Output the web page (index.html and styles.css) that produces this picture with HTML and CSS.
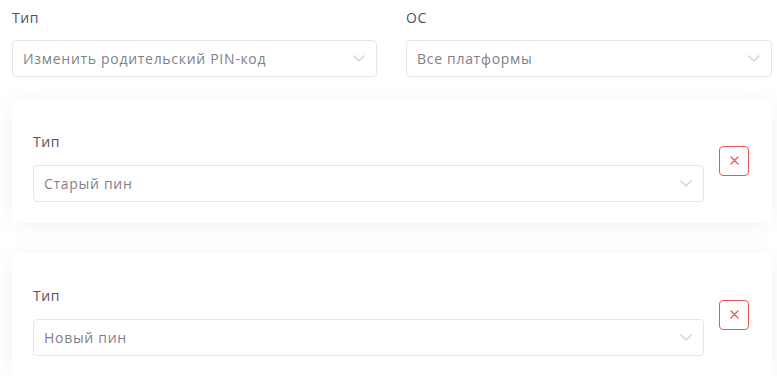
FILE: index.html
```html
<!DOCTYPE html>
<html lang="ru">
<head>
<meta charset="utf-8">
<link rel="stylesheet" href="styles.css">
</head>
<body>
<div class="page">
  <div class="top-row">
    <div class="field">
      <div class="label">Тип</div>
      <div class="select">
        <span class="value">Изменить родительский PIN-код</span>
        <svg class="chev" width="12" height="7" viewBox="0 0 12 7"><path d="M1 1l5 5 5-5" fill="none" stroke="#d6d6d9" stroke-width="1.6" stroke-linecap="round" stroke-linejoin="round"/></svg>
      </div>
    </div>
    <div class="field">
      <div class="label">ОС</div>
      <div class="select">
        <span class="value">Все платформы</span>
        <svg class="chev" width="12" height="7" viewBox="0 0 12 7"><path d="M1 1l5 5 5-5" fill="none" stroke="#d6d6d9" stroke-width="1.6" stroke-linecap="round" stroke-linejoin="round"/></svg>
      </div>
    </div>
  </div>

  <div class="card">
    <div class="card-body">
      <div class="label">Тип</div>
      <div class="select">
        <span class="value">Старый пин</span>
        <svg class="chev" width="12" height="7" viewBox="0 0 12 7"><path d="M1 1l5 5 5-5" fill="none" stroke="#d6d6d9" stroke-width="1.6" stroke-linecap="round" stroke-linejoin="round"/></svg>
      </div>
    </div>
    <button class="remove" type="button">
      <svg width="9" height="9" viewBox="0 0 9 9"><path d="M1 1l7 7M8 1L1 8" stroke="#e35a5a" stroke-width="1.3" stroke-linecap="round"/></svg>
    </button>
  </div>

  <div class="card">
    <div class="card-body">
      <div class="label">Тип</div>
      <div class="select">
        <span class="value">Новый пин</span>
        <svg class="chev" width="12" height="7" viewBox="0 0 12 7"><path d="M1 1l5 5 5-5" fill="none" stroke="#d6d6d9" stroke-width="1.6" stroke-linecap="round" stroke-linejoin="round"/></svg>
      </div>
    </div>
    <button class="remove" type="button">
      <svg width="9" height="9" viewBox="0 0 9 9"><path d="M1 1l7 7M8 1L1 8" stroke="#e35a5a" stroke-width="1.3" stroke-linecap="round"/></svg>
    </button>
  </div>
</div>
</body>
</html>
```
FILE: styles.css
```css
html, body {
  margin: 0;
  padding: 0;
  background: #ffffff;
}
body {
  font-family: "Open Sans", "Noto Sans", sans-serif;
  font-size: 14px;
  color: #4a4a58;
}
.page {
  width: 760px;
  padding: 8px 0 0 12px;
  display: flex;
  flex-direction: column;
}
.top-row {
  display: grid;
  grid-template-columns: 365px 366px;
  column-gap: 29px;
}
.label {
  height: 20px;
  line-height: 20px;
  color: #50505e;
  letter-spacing: 0.6px;
}
.field .label {
  margin-bottom: 12px;
}
.select {
  height: 37px;
  box-sizing: border-box;
  border: 1px solid #e6e6e8;
  border-radius: 4px;
  background: #fff;
  display: flex;
  align-items: center;
  justify-content: space-between;
  padding: 0 11px 0 10px;
}
.value {
  color: #7f7f8a;
  letter-spacing: 0.7px;
}
.chev {
  display: block;
}
.card {
  margin-top: 22px;
  background: #fff;
  border-radius: 6px;
  box-shadow: 0 2px 22px rgba(0, 0, 0, 0.055);
  display: flex;
  align-items: center;
  gap: 15px;
  padding: 33px 23px 21px 21px;
}
.card + .card {
  margin-top: 30px;
}
.card-body {
  flex: 1;
}
.card-body .label {
  margin-bottom: 13px;
}
.remove {
  width: 30px;
  height: 30px;
  padding: 0;
  margin: -13px 0 0 0;
  border: 1px solid #e35a5a;
  border-radius: 4px;
  background: #fff;
  display: flex;
  align-items: center;
  justify-content: center;
  cursor: pointer;
}
.remove svg {
  display: block;
}
```
